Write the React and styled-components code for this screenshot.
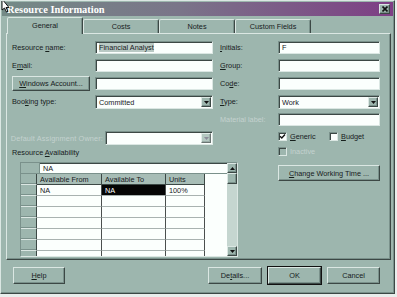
import React from 'react';
import styled, { createGlobalStyle, css } from 'styled-components';

const C = {
  face: '#9db6ae',
  light: '#dbe7e3',
  mid: '#7a918b',
  dark: '#3c4845',
  ink: '#17201d',
  white: '#fbfffd',
  disabled: '#c4d2ce',
  head: '#a7bdb6',
};

const GlobalStyle = createGlobalStyle`
  html, body { margin: 0; padding: 0; }
  body {
    background: #e9eeec;
    font-family: "Liberation Sans", Arial, sans-serif;
    font-size: 7.3px;
    color: ${C.ink};
  }
  * { box-sizing: border-box; }
`;

const raised = css`
  border: 1px solid;
  border-color: ${C.light} ${C.dark} ${C.dark} ${C.light};
  box-shadow: inset -1px -1px 0 ${C.mid};
`;

const sunken = css`
  border: 1px solid;
  border-color: ${C.mid} ${C.light} ${C.light} ${C.mid};
  box-shadow: inset 1px 1px 0 ${C.dark};
`;

const Dialog = styled.div`
  position: relative;
  width: 395px;
  height: 294px;
  background: ${C.face};
  ${raised};
  padding: 1px;
  display: flex;
  flex-direction: column;
`;

const TitleBar = styled.div`
  height: 14px;
  flex: none;
  background: linear-gradient(90deg, #748a86 0%, #7a7589 45%, #7e3f85 100%);
  display: flex;
  align-items: center;
  justify-content: space-between;
  padding: 0 3px 0 5px;
`;

const Title = styled.span`
  font-family: "Liberation Serif", "Times New Roman", serif;
  font-weight: bold;
  font-size: 10.4px;
  color: #fff;
`;

const CloseBtn = styled.div`
  width: 11px;
  height: 10px;
  background: ${C.face};
  ${raised};
  display: flex;
  align-items: center;
  justify-content: center;
`;

const Body = styled.div`
  flex: 1;
  display: flex;
  flex-direction: column;
  padding: 1px 2px 0 4px;
`;

const TabRow = styled.div`
  display: flex;
  height: 16px;
  padding-left: 1px;
  align-items: flex-end;
`;

const Tab = styled.div`
  position: relative;
  width: 76px;
  height: ${(p) => (p.$active ? '17px' : '14px')};
  margin-bottom: ${(p) => (p.$active ? '-1px' : '0')};
  z-index: ${(p) => (p.$active ? 2 : 1)};
  background: ${C.face};
  border: 1px solid;
  border-bottom: none;
  border-color: ${C.light} ${C.dark} transparent ${C.light};
  border-radius: 2px 2px 0 0;
  box-shadow: inset -1px 0 0 ${C.mid};
  display: flex;
  align-items: center;
  justify-content: center;
  padding-bottom: ${(p) => (p.$active ? '2px' : '0')};
`;

const Panel = styled.div`
  height: 227px;
  flex: none;
  background: ${C.face};
  ${raised};
  padding: 7px 5px 0 5px;
  display: flex;
  flex-direction: column;
`;

const FormGrid = styled.div`
  display: grid;
  grid-template-columns: 83px 118px 65px 102px;
  grid-auto-rows: 13px;
  row-gap: 5px;
`;

const LabelBox = styled.div`
  display: flex;
  align-items: center;
  justify-content: ${(p) => (p.$right ? 'flex-end' : 'flex-start')};
  white-space: nowrap;
  padding-left: ${(p) => (p.$indent ? '7px' : '0')};
  padding-right: ${(p) => (p.$right ? '2px' : '0')};
  color: ${(p) => (p.$disabled ? C.disabled : C.ink)};
  letter-spacing: ${(p) => p.$ls || '0'};
`;

const Label = ({ children, ...rest }) => (
  <LabelBox {...rest}>
    <span>{children}</span>
  </LabelBox>
);

const U = styled.span`
  text-decoration: underline;
`;

const TextBox = styled.div`
  height: ${(p) => p.$h || '13px'};
  background: ${C.white};
  ${sunken};
  display: flex;
  align-items: center;
  padding-left: 3px;
  white-space: nowrap;
  overflow: hidden;
`;

const Highlight = styled.span`
  background: #b9c9c4;
  color: ${C.ink};
`;

const SelectBox = styled.div`
  height: ${(p) => p.$h || '13px'};
  background: ${C.white};
  ${sunken};
  display: flex;
  align-items: stretch;
  padding: 1px 1px 1px 3px;
`;

const SelectText = styled.div`
  flex: 1;
  display: flex;
  align-items: center;
`;

const ArrowBtn = styled.div`
  width: 10px;
  background: ${C.face};
  ${raised};
  display: flex;
  align-items: center;
  justify-content: center;
  opacity: ${(p) => (p.$disabled ? 0.75 : 1)};
`;

const ButtonBox = styled.div`
  width: ${(p) => p.$w};
  height: ${(p) => p.$h || '17px'};
  background: ${C.face};
  border: 1px solid;
  border-color: ${C.light} ${C.dark} ${C.dark} ${C.light};
  box-shadow: ${(p) =>
    p.$default
      ? `0 0 0 1px #111, inset -1px -1px 0 ${C.mid}`
      : `inset -1px -1px 0 ${C.mid}`};
  display: flex;
  align-items: center;
  justify-content: center;
  white-space: nowrap;
  flex: none;
`;

const Button = ({ children, ...rest }) => (
  <ButtonBox {...rest}>
    <span>{children}</span>
  </ButtonBox>
);

const Lower = styled.div`
  display: grid;
  grid-template-columns: 266px 102px;
  margin-top: 5px;
`;

const LeftCol = styled.div`
  display: flex;
  flex-direction: column;
`;

const OwnerRow = styled.div`
  display: grid;
  grid-template-columns: 100px 108px;
  height: 14px;
  margin-left: -7px;
`;

const SectionLabel = styled.div`
  margin-top: 3px;
  height: 10px;
  line-height: 10px;
`;

const AvailGrid = styled.div`
  margin: 4px 0 0 8px;
  width: 218px;
  height: 95px;
  background: ${C.white};
  ${sunken};
  display: flex;
  overflow: hidden;
`;

const GridMain = styled.div`
  flex: 1;
  display: flex;
  flex-direction: column;
  overflow: hidden;
`;

const EditRow = styled.div`
  height: 11px;
  flex: none;
  display: flex;
  border-bottom: 1px solid ${C.mid};
`;

const EditStub = styled.div`
  width: 19px;
  background: ${C.face};
  border-right: 1px solid ${C.mid};
`;

const EditField = styled.div`
  flex: 1;
  display: flex;
  align-items: center;
  padding-left: 3px;
`;

const GRow = styled.div`
  display: grid;
  grid-template-columns: 16px 65px 64px 39px 1fr;
  height: 11px;
  flex: none;
`;

const RowHead = styled.div`
  background: ${C.face};
  border-right: 1px solid ${C.dark};
  border-bottom: 1px solid ${C.light};
  box-shadow: inset 0 -1px 0 ${C.mid};
`;

const HeadCell = styled.div`
  background: ${C.head};
  border-right: 1px solid ${C.dark};
  border-bottom: 1px solid ${C.dark};
  display: flex;
  align-items: center;
  padding-left: 3px;
  white-space: nowrap;
`;

const Cell = styled.div`
  background: ${(p) => (p.$selected ? '#050505' : 'transparent')};
  color: ${(p) => (p.$selected ? '#fff' : C.ink)};
  border-right: 1px solid ${(p) => (p.$open ? 'transparent' : '#4a4f4e')};
  border-bottom: 1px solid ${(p) => (p.$open ? 'transparent' : '#a8b2b0')};
  display: flex;
  align-items: center;
  padding-left: 3px;
  white-space: nowrap;
`;

const ScrollBar = styled.div`
  width: 10px;
  flex: none;
  display: flex;
  flex-direction: column;
  background: #c5d6d0;
`;

const ScrollBtn = styled.div`
  height: ${(p) => p.$h || '10px'};
  flex: none;
  background: ${C.face};
  ${raised};
  display: flex;
  align-items: center;
  justify-content: center;
`;

const ScrollTrack = styled.div`
  flex: 1;
`;

const RightCol = styled.div`
  display: flex;
  flex-direction: column;
`;

const CheckRow = styled.div`
  display: flex;
  height: 10px;
  margin-top: ${(p) => p.$mt || '0'};
`;

const CheckItem = styled.div`
  width: 58px;
  display: flex;
  align-items: center;
  gap: 3px;
  color: ${(p) => (p.$disabled ? C.disabled : C.ink)};
`;

const Box = styled.div`
  width: 9px;
  height: 9px;
  background: ${(p) => (p.$disabled ? C.face : C.white)};
  ${sunken};
  display: flex;
  align-items: center;
  justify-content: center;
`;

const WorkBtnWrap = styled.div`
  margin-top: 9px;
`;

const ButtonRow = styled.div`
  display: flex;
  align-items: center;
  margin-top: 7px;
  padding: 0 11px 0 7px;
  height: 17px;
`;

const RightButtons = styled.div`
  margin-left: auto;
  display: flex;
  gap: 6px;
`;

const Cursor = styled.svg`
  position: absolute;
  left: 0;
  top: 0;
  z-index: 5;
`;

const DownTri = ({ color = '#111' }) => (
  <svg width="5" height="3" viewBox="0 0 5 3">
    <polygon points="0,0 5,0 2.5,3" fill={color} />
  </svg>
);

const UpTri = () => (
  <svg width="5" height="3" viewBox="0 0 5 3">
    <polygon points="0,3 5,3 2.5,0" fill="#111" />
  </svg>
);

const Check = () => (
  <svg width="7" height="7" viewBox="0 0 7 7">
    <polyline points="1,3.2 2.8,5 6,1.5" fill="none" stroke="#111" strokeWidth="1.4" />
  </svg>
);

const Select = ({ children, disabled, h }) => (
  <SelectBox $h={h}>
    <SelectText>{children}</SelectText>
    <ArrowBtn $disabled={disabled}>
      <DownTri color={disabled ? '#667' : '#111'} />
    </ArrowBtn>
  </SelectBox>
);

const emptyRows = [1, 2, 3, 4, 5, 6];

export default function App() {
  return (
    <>
      <GlobalStyle />
      <Dialog>
        <Cursor width="9" height="12" viewBox="0 0 9 12">
          <polygon points="1,-2 1,9 3.5,7 5.5,11 7,10.3 5,6.5 8,6.5" fill="#fff" stroke="#000" strokeWidth="0.9" />
        </Cursor>
        <TitleBar>
          <Title>Resource Information</Title>
          <CloseBtn>
            <svg width="6" height="6" viewBox="0 0 6 6">
              <path d="M0.5 0.5 L5.5 5.5 M5.5 0.5 L0.5 5.5" stroke="#111" strokeWidth="1.6" />
            </svg>
          </CloseBtn>
        </TitleBar>
        <Body>
          <TabRow>
            <Tab $active>General</Tab>
            <Tab>Costs</Tab>
            <Tab>Notes</Tab>
            <Tab>Custom Fields</Tab>
          </TabRow>
          <Panel>
            <FormGrid>
              <Label>Resource <U>n</U>ame:</Label>
              <TextBox><Highlight>Financial Analyst</Highlight></TextBox>
              <Label $indent><U>I</U>nitials:</Label>
              <TextBox>F</TextBox>

              <Label>E<U>m</U>ail:</Label>
              <TextBox />
              <Label $indent><U>G</U>roup:</Label>
              <TextBox />

              <LabelBox>
                <Button $w="78px" $h="15px"><U>W</U>indows Account...</Button>
              </LabelBox>
              <TextBox />
              <Label $indent>Co<U>d</U>e:</Label>
              <TextBox />

              <Label>Boo<U>k</U>ing type:</Label>
              <Select h="14px">Committed</Select>
              <Label $indent><U>T</U>ype:</Label>
              <Select h="14px">Work</Select>

              <span />
              <span />
              <Label $indent $disabled>Material label:</Label>
              <TextBox />
            </FormGrid>

            <Lower>
              <LeftCol>
                <OwnerRow>
                  <Label $disabled $right $ls="0.15px">Default Assignment Owner:</Label>
                  <Select h="14px" disabled />
                </OwnerRow>
                <SectionLabel>Resource <U>A</U>vailability</SectionLabel>
                <AvailGrid>
                  <GridMain>
                    <EditRow>
                      <EditStub />
                      <EditField>NA</EditField>
                    </EditRow>
                    <GRow>
                      <RowHead />
                      <HeadCell>Available From</HeadCell>
                      <HeadCell>Available To</HeadCell>
                      <HeadCell>Units</HeadCell>
                      <Cell $open />
                    </GRow>
                    <GRow>
                      <RowHead />
                      <Cell>NA</Cell>
                      <Cell $selected>NA</Cell>
                      <Cell>100%</Cell>
                      <Cell $open />
                    </GRow>
                    {emptyRows.map((r) => (
                      <GRow key={r}>
                        <RowHead />
                        <Cell />
                        <Cell />
                        <Cell />
                        <Cell $open />
                      </GRow>
                    ))}
                  </GridMain>
                  <ScrollBar>
                    <ScrollBtn><UpTri /></ScrollBtn>
                    <ScrollBtn $h="11px" />
                    <ScrollTrack />
                    <ScrollBtn><DownTri /></ScrollBtn>
                  </ScrollBar>
                </AvailGrid>
              </LeftCol>

              <RightCol>
                <CheckRow>
                  <CheckItem>
                    <Box><Check /></Box>
                    <span><U>G</U>eneric</span>
                  </CheckItem>
                  <CheckItem>
                    <Box />
                    <span><U>B</U>udget</span>
                  </CheckItem>
                </CheckRow>
                <CheckRow $mt="5px">
                  <CheckItem $disabled>
                    <Box $disabled />
                    <span>Inactive</span>
                  </CheckItem>
                </CheckRow>
                <WorkBtnWrap>
                  <Button $w="102px" $h="16px"><U>C</U>hange Working Time ...</Button>
                </WorkBtnWrap>
              </RightCol>
            </Lower>
          </Panel>

          <ButtonRow>
            <Button $w="52px"><U>H</U>elp</Button>
            <RightButtons>
              <Button $w="54px">De<U>t</U>ails...</Button>
              <Button $w="53px" $default>OK</Button>
              <Button $w="53px">Cancel</Button>
            </RightButtons>
          </ButtonRow>
        </Body>
      </Dialog>
    </>
  );
}
